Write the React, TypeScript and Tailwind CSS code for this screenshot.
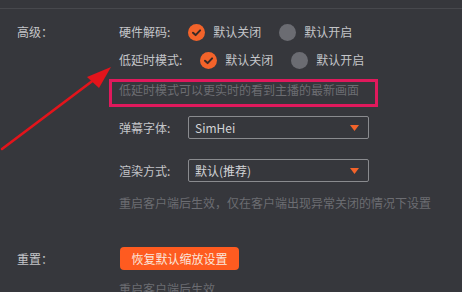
import React from "react";

const font = { fontFamily: '"Noto Sans CJK SC", "Noto Sans", sans-serif' };

function Checked() {
  return (
    <svg width="17" height="17" viewBox="0 0 17 17" className="shrink-0">
      <circle cx="8.5" cy="8.5" r="8.5" fill="#f3632a" />
      <path d="M5 8.7 L7.6 11.1 L12.1 6.4" fill="none" stroke="#3a2a26" strokeWidth="2" strokeLinecap="round" strokeLinejoin="round" />
    </svg>
  );
}

function Unchecked() {
  return <div className="w-[17px] h-[17px] rounded-full bg-[#6b6c72] shrink-0" />;
}

function Option({ checked, text }: { checked: boolean; text: string }) {
  return (
    <div className="flex items-center gap-[8px]">
      {checked ? <Checked /> : <Unchecked />}
      <span className="text-[12px] leading-[20px] text-[#c4c5c9]">{text}</span>
    </div>
  );
}

function Select({ value }: { value: string }) {
  return (
    <div className="w-[181px] h-[23px] border border-[#8a8b8f] rounded-[2px] flex items-center justify-between pl-[6px] pr-[9px]">
      <span className="text-[12px] leading-[20px] text-[#d2d3d6]">{value}</span>
      <svg width="9" height="6" viewBox="0 0 9 6">
        <path d="M0 0 L9 0 L4.5 6 Z" fill="#f3632a" />
      </svg>
    </div>
  );
}

export default function App() {
  return (
    <div className="relative w-[462px] h-[292px] overflow-hidden bg-[#36373c]" style={font}>
      <div className="pt-[8px]">
        <div className="h-[1px] bg-[#47484d]" />
      </div>

      {/* 高级 */}
      <div className="flex mt-[13px] h-[20px] items-center">
        <div className="w-[119px] pl-[17px] text-[12px] leading-[20px] text-[#c4c5c9]">高级：</div>
        <div className="flex items-center gap-[18px]">
          <span className="text-[12px] leading-[20px] text-[#c4c5c9]">硬件解码:</span>
          <Option checked text="默认关闭" />
          <Option checked={false} text="默认开启" />
        </div>
      </div>

      <div className="flex mt-[8px] h-[20px] items-center">
        <div className="w-[119px]" />
        <div className="flex items-center gap-[18px]">
          <span className="text-[12px] leading-[20px] text-[#c4c5c9]">低延时模式:</span>
          <Option checked text="默认关闭" />
          <Option checked={false} text="默认开启" />
        </div>
      </div>

      <div className="flex mt-[9px]">
        <div className="w-[109px]" />
        <div className="w-[269px] h-[28px] border-[3px] border-[#e0195c] pl-[7px] flex items-center">
          <span className="text-[12px] leading-[20px] text-[#6c6d72] -mt-[6px]">低延时模式可以更实时的看到主播的最新画面</span>
        </div>
      </div>

      <div className="flex mt-[9px] items-center">
        <div className="w-[119px]" />
        <span className="w-[69px] text-[12px] leading-[20px] text-[#c4c5c9]">弹幕字体:</span>
        <Select value="SimHei" />
      </div>

      <div className="flex mt-[20px] items-center">
        <div className="w-[119px]" />
        <span className="w-[69px] text-[12px] leading-[20px] text-[#c4c5c9]">渲染方式:</span>
        <Select value="默认(推荐)" />
      </div>

      <div className="flex mt-[12px]">
        <div className="w-[119px]" />
        <span className="text-[12px] leading-[18px] text-[#6c6d72]">重启客户端后生效，仅在客户端出现异常关闭的情况下设置</span>
      </div>

      {/* 重置 */}
      <div className="flex mt-[35px] items-center">
        <div className="w-[120px] pl-[17px] text-[12px] leading-[20px] text-[#c4c5c9]">重置：</div>
        <button className="w-[119px] h-[23px] rounded-[4px] bg-[#fe5b20] text-[12px] leading-[20px] text-[#fbe6dc] flex items-center justify-center">
          恢复默认缩放设置
        </button>
      </div>

      <div className="flex mt-[10px]">
        <div className="w-[119px]" />
        <span className="text-[12px] leading-[18px] text-[#6c6d72]">重启客户端后生效</span>
      </div>

      {/* annotation arrow */}
      <svg className="absolute left-0 top-0 pointer-events-none" width="462" height="292" viewBox="0 0 462 292">
        <line x1="2" y1="149" x2="95" y2="79" stroke="#e3141b" strokeWidth="2.6" strokeLinecap="round" />
        <path d="M111 67 L87 77 L99 88 Z" fill="#e3141b" />
      </svg>
    </div>
  );
}
